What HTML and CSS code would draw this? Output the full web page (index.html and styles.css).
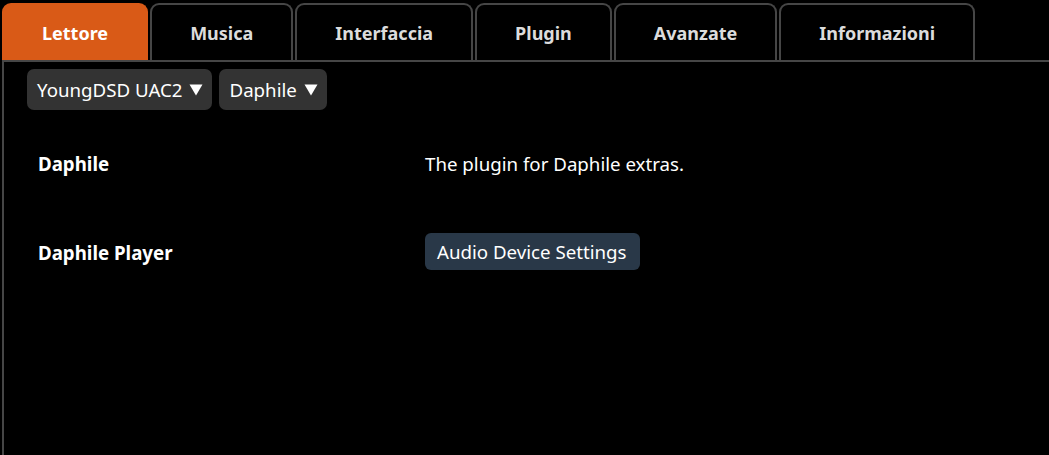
FILE: index.html
```html
<!DOCTYPE html>
<html lang="it">
<head>
<meta charset="utf-8">
<title>Impostazioni</title>
<link rel="stylesheet" href="styles.css">
</head>
<body>
<div class="tabs">
  <div class="tab active">Lettore</div>
  <div class="tab">Musica</div>
  <div class="tab">Interfaccia</div>
  <div class="tab">Plugin</div>
  <div class="tab">Avanzate</div>
  <div class="tab">Informazioni</div>
</div>
<div class="panel">
  <div class="selects">
    <div class="select">YoungDSD UAC2<svg class="arrow" width="14" height="12" viewBox="0 0 14 12"><path d="M0.5 0.5H13.5L7 11.5Z" fill="#fff"/></svg></div>
    <div class="select">Daphile<svg class="arrow" width="14" height="12" viewBox="0 0 14 12"><path d="M0.5 0.5H13.5L7 11.5Z" fill="#fff"/></svg></div>
  </div>
  <div class="row">
    <div class="label">Daphile</div>
    <div class="value">The plugin for Daphile extras.</div>
  </div>
  <div class="row row2">
    <div class="label">Daphile Player</div>
    <div class="value"><span class="btn">Audio Device Settings</span></div>
  </div>
</div>
</body>
</html>
```
FILE: styles.css
```css
html, body {
  margin: 0;
  height: 100%;
  background: #000;
}
body {
  padding: 0 0 0 2px;
  box-sizing: border-box;
  font-family: "Noto Sans", "Open Sans", sans-serif;
  color: #fff;
  display: flex;
  flex-direction: column;
  overflow: hidden;
}
.tabs {
  display: flex;
  gap: 2px;
  padding-top: 3px;
  height: 57px;
  flex: none;
}
.tab {
  box-sizing: border-box;
  height: 57px;
  padding: 0 38px;
  border: 2px solid #464646;
  border-bottom: none;
  border-radius: 9px 9px 0 0;
  display: flex;
  align-items: center;
  justify-content: center;
  font-weight: 700;
  font-size: 18px;
  color: #dcdcdc;
}
.tab.active {
  background: #d95a17;
  border-color: #d95a17;
  color: #fff;
}
.panel {
  flex: 1;
  border-top: 2px solid #464646;
  border-left: 2px solid #464646;
  padding: 7px 0 0 23px;
}
.selects {
  display: flex;
  gap: 7px;
}
.select {
  height: 41px;
  box-sizing: border-box;
  background: #333;
  border-radius: 7px;
  padding: 0 9px 0 10px;
  display: flex;
  align-items: center;
  font-size: 18.7px;
  color: #fff;
}
.arrow {
  margin-left: 7px;
  margin-top: 1px;
}
.row {
  display: flex;
  align-items: center;
  margin-top: 41px;
  height: 24px;
  font-size: 18.7px;
}
.row2 {
  margin-top: 65px;
}
.label {
  width: 387px;
  padding-left: 11px;
  font-weight: 700;
}
.btn {
  display: inline-flex;
  align-items: center;
  height: 37px;
  margin-top: -2px;
  padding: 0 13px 0 12px;
  border-radius: 6px;
  background: #293848;
}
```
